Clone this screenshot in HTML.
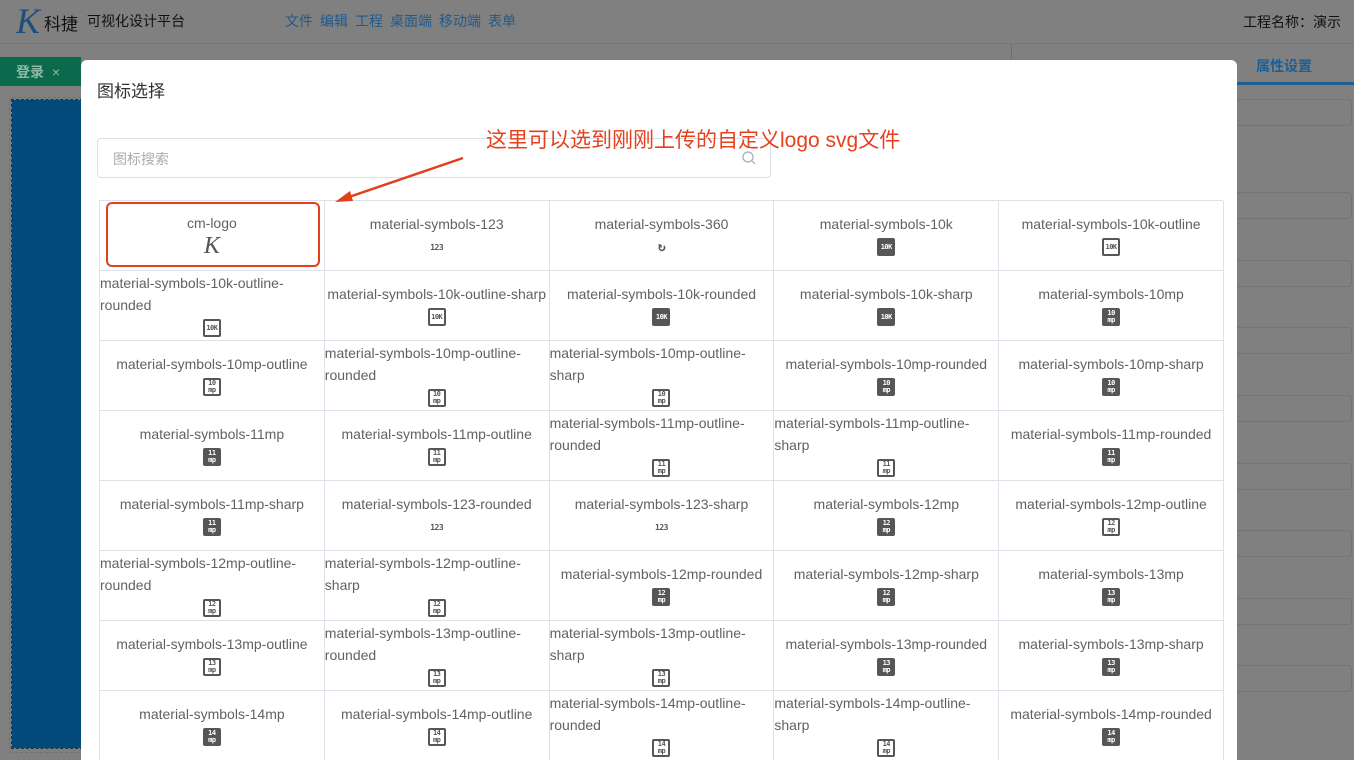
<!DOCTYPE html>
<html><head><meta charset="utf-8"><style>
*{box-sizing:border-box;margin:0;padding:0}
html,body{width:1354px;height:760px;overflow:hidden}
body{background:#808080;font-family:"Liberation Sans","Noto Sans CJK SC",sans-serif;position:relative}
.abs{position:absolute}
.hdr{left:0;top:0;width:1354px;height:44px;border-bottom:1px dotted #6e6e6e}
.logo{left:16px;top:0px;font-family:"Liberation Serif",serif;font-style:italic;font-size:36px;color:#1e4f7a}
.t1{left:44px;top:10px;font-size:17px;color:#111}
.t2{left:87px;top:11px;font-size:14px;color:#111}
.nav{left:285px;top:11px;font-size:14px;color:#22598a}
.nav span{margin-right:7px}
.pn{right:13px;top:12px;font-size:14px;color:#111}
.tab{left:0;top:57px;width:81px;height:29px;background:#0b6a4b;color:#8fb8a5;font-size:14px;padding:5px 0 0 16px;font-weight:bold}
.canvas{left:12px;top:100px;width:70px;height:648px;background:#014a7a;outline:1px dashed #123a55}
.cwrap{left:9px;top:97px;width:80px;height:656px;border:1px dashed #717171;border-radius:4px}
.rtab{left:1256px;top:56px;font-size:14px;color:#1d5e95;font-weight:bold}
.rline{left:1237px;top:82px;width:117px;height:3px;background:#1d5e95}
.inp{left:1230px;width:122px;height:27px;border:1px solid #747474;border-radius:4px}
.modal{left:81px;top:60px;width:1156px;height:700px;background:#fff;border-radius:6px 6px 0 0}
.title{left:97px;top:77px;font-size:17px;color:#303133}
.search{left:97px;top:138px;width:674px;height:40px;border:1px solid #dcdfe6;border-radius:4px;font-size:14px;color:#a8abb2;padding:10px 0 0 15px}
.note{left:486px;top:124px;font-size:21px;color:#e6411c}
.grid{left:99px;top:200px;width:1124px;border-left:1px solid #dde1e8;border-top:1px solid #dde1e8;display:grid;grid-template-columns:repeat(5,224.8px);grid-auto-rows:70px}
.c{border-right:1px solid #dde1e8;border-bottom:1px solid #dde1e8;display:flex;flex-direction:column;align-items:center;justify-content:center;font-size:14px;color:#606266;line-height:22px;white-space:nowrap;overflow:hidden;padding-bottom:2px}
.c .t{width:100%;text-align:center}
.c .t2l{width:100%;text-align:left}
.i{width:18px;height:18px;margin-top:3px;border-radius:2px;background:#565656;color:#fff;font-size:7px;font-weight:bold;line-height:7px;display:flex;flex-direction:column;align-items:center;justify-content:center;font-family:"DejaVu Sans Mono",monospace;letter-spacing:-0.5px}
.i.o{background:#fff;border:2px solid #565656;color:#565656}
.i.n{background:none;color:#565656;font-size:8px}
.sel{left:106px;top:202px;width:214px;height:65px;border:2px solid #e0401a;border-radius:6px}
</style></head><body>
<div class="abs hdr"></div>
<div class="abs logo">K</div>
<div class="abs t1">科捷</div>
<div class="abs t2">可视化设计平台</div>
<div class="abs nav"><span>文件</span><span>编辑</span><span>工程</span><span>桌面端</span><span>移动端</span><span>表单</span></div>
<div class="abs pn">工程名称：演示</div>
<div class="abs" style="left:1011px;top:44px;width:1px;height:16px;background:#6e6e6e"></div>
<div class="abs tab">登录 <span style="font-weight:normal;margin-left:4px">×</span></div>
<div class="abs cwrap"></div>
<div class="abs canvas"></div>
<div class="abs rtab">属性设置</div>
<div class="abs rline"></div>
<div class="abs inp" style="top:99px"></div>
<div class="abs inp" style="top:192px"></div>
<div class="abs inp" style="top:260px"></div>
<div class="abs inp" style="top:327px"></div>
<div class="abs inp" style="top:395px"></div>
<div class="abs inp" style="top:463px"></div>
<div class="abs inp" style="top:530px"></div>
<div class="abs inp" style="top:598px"></div>
<div class="abs inp" style="top:665px"></div>

<div class="abs modal"></div>
<div class="abs title">图标选择</div>
<div class="abs search">图标搜索</div>
<svg class="abs" style="left:741px;top:150px" width="16" height="16" viewBox="0 0 16 16"><circle cx="7" cy="7" r="5" fill="none" stroke="#a8abb2" stroke-width="1.2"/><path d="M10.5 10.5L14 14" stroke="#a8abb2" stroke-width="1.2"/></svg>
<div class="abs note">这里可以选到刚刚上传的自定义logo svg文件</div>

<div class="abs grid">
<div class="c"><div class="t">cm-logo</div><div style="font-family:'Liberation Serif',serif;font-style:italic;font-size:24px;line-height:24px;color:#555">K</div></div>
<div class="c"><div class="t">material-symbols-123</div><div class="i n">123</div></div>
<div class="c"><div class="t">material-symbols-360</div><div class="i n" style="font-size:13px">↻</div></div>
<div class="c"><div class="t">material-symbols-10k</div><div class="i">10K</div></div>
<div class="c"><div class="t">material-symbols-10k-outline</div><div class="i o">10K</div></div>

<div class="c"><div class="t2l">material-symbols-10k-outline-<br>rounded</div><div class="i o">10K</div></div>
<div class="c"><div class="t">material-symbols-10k-outline-sharp</div><div class="i o">10K</div></div>
<div class="c"><div class="t">material-symbols-10k-rounded</div><div class="i">10K</div></div>
<div class="c"><div class="t">material-symbols-10k-sharp</div><div class="i">10K</div></div>
<div class="c"><div class="t">material-symbols-10mp</div><div class="i">10<br>mp</div></div>

<div class="c"><div class="t">material-symbols-10mp-outline</div><div class="i o">10<br>mp</div></div>
<div class="c"><div class="t2l">material-symbols-10mp-outline-<br>rounded</div><div class="i o">10<br>mp</div></div>
<div class="c"><div class="t2l">material-symbols-10mp-outline-<br>sharp</div><div class="i o">10<br>mp</div></div>
<div class="c"><div class="t">material-symbols-10mp-rounded</div><div class="i">10<br>mp</div></div>
<div class="c"><div class="t">material-symbols-10mp-sharp</div><div class="i">10<br>mp</div></div>

<div class="c"><div class="t">material-symbols-11mp</div><div class="i">11<br>mp</div></div>
<div class="c"><div class="t">material-symbols-11mp-outline</div><div class="i o">11<br>mp</div></div>
<div class="c"><div class="t2l">material-symbols-11mp-outline-<br>rounded</div><div class="i o">11<br>mp</div></div>
<div class="c"><div class="t2l">material-symbols-11mp-outline-<br>sharp</div><div class="i o">11<br>mp</div></div>
<div class="c"><div class="t">material-symbols-11mp-rounded</div><div class="i">11<br>mp</div></div>

<div class="c"><div class="t">material-symbols-11mp-sharp</div><div class="i">11<br>mp</div></div>
<div class="c"><div class="t">material-symbols-123-rounded</div><div class="i n">123</div></div>
<div class="c"><div class="t">material-symbols-123-sharp</div><div class="i n">123</div></div>
<div class="c"><div class="t">material-symbols-12mp</div><div class="i">12<br>mp</div></div>
<div class="c"><div class="t">material-symbols-12mp-outline</div><div class="i o">12<br>mp</div></div>

<div class="c"><div class="t2l">material-symbols-12mp-outline-<br>rounded</div><div class="i o">12<br>mp</div></div>
<div class="c"><div class="t2l">material-symbols-12mp-outline-<br>sharp</div><div class="i o">12<br>mp</div></div>
<div class="c"><div class="t">material-symbols-12mp-rounded</div><div class="i">12<br>mp</div></div>
<div class="c"><div class="t">material-symbols-12mp-sharp</div><div class="i">12<br>mp</div></div>
<div class="c"><div class="t">material-symbols-13mp</div><div class="i">13<br>mp</div></div>

<div class="c"><div class="t">material-symbols-13mp-outline</div><div class="i o">13<br>mp</div></div>
<div class="c"><div class="t2l">material-symbols-13mp-outline-<br>rounded</div><div class="i o">13<br>mp</div></div>
<div class="c"><div class="t2l">material-symbols-13mp-outline-<br>sharp</div><div class="i o">13<br>mp</div></div>
<div class="c"><div class="t">material-symbols-13mp-rounded</div><div class="i">13<br>mp</div></div>
<div class="c"><div class="t">material-symbols-13mp-sharp</div><div class="i">13<br>mp</div></div>

<div class="c"><div class="t">material-symbols-14mp</div><div class="i">14<br>mp</div></div>
<div class="c"><div class="t">material-symbols-14mp-outline</div><div class="i o">14<br>mp</div></div>
<div class="c"><div class="t2l">material-symbols-14mp-outline-<br>rounded</div><div class="i o">14<br>mp</div></div>
<div class="c"><div class="t2l">material-symbols-14mp-outline-<br>sharp</div><div class="i o">14<br>mp</div></div>
<div class="c"><div class="t">material-symbols-14mp-rounded</div><div class="i">14<br>mp</div></div>
</div>
<div class="abs sel"></div>
<svg class="abs" style="left:0;top:0" width="1354" height="760"><path d="M463 158L346 198" stroke="#e0401a" stroke-width="2.5"/><path d="M335 202L350 191L353 201Z" fill="#e0401a"/></svg>
</body></html>
